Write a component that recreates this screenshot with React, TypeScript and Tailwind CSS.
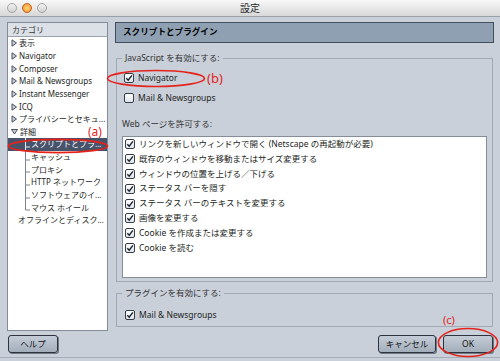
import React from "react";

type Cat = { t: string; kind: "closed" | "open" | "sub" | "plain"; last?: boolean; sel?: boolean };

const cats: Cat[] = [
  { t: "表示", kind: "closed" },
  { t: "Navigator", kind: "closed" },
  { t: "Composer", kind: "closed" },
  { t: "Mail & Newsgroups", kind: "closed" },
  { t: "Instant Messenger", kind: "closed" },
  { t: "ICQ", kind: "closed" },
  { t: "プライバシーとセキュ...", kind: "closed" },
  { t: "詳細", kind: "open" },
  { t: "スクリプトとプラ...", kind: "sub", sel: true },
  { t: "キャッシュ", kind: "sub" },
  { t: "プロキシ", kind: "sub" },
  { t: "HTTP ネットワーク", kind: "sub" },
  { t: "ソフトウェアのイ...", kind: "sub" },
  { t: "マウス ホイール", kind: "sub", last: true },
  { t: "オフラインとディスク...", kind: "plain" },
];

const perms = [
  "リンクを新しいウィンドウで開く (Netscape の再起動が必要)",
  "既存のウィンドウを移動またはサイズ変更する",
  "ウィンドウの位置を上げる／下げる",
  "ステータス バーを隠す",
  "ステータス バーのテキストを変更する",
  "画像を変更する",
  "Cookie を作成または変更する",
  "Cookie を読む",
];

const Check = ({ on }: { on?: boolean }) => (
  <span className="w-[10px] h-[10px] shrink-0 rounded-[2px] border border-[#363e4a] bg-linear-to-b from-[#ffffff] to-[#dfe4ea] flex items-center justify-center">
    {on && (
      <svg width="8" height="8" viewBox="0 0 8 8">
        <path d="M1.3 4.3 L3.2 6.2 L6.9 1.3" fill="none" stroke="#1b222c" strokeWidth="1.4" />
      </svg>
    )}
  </span>
);

const Arrow = ({ open }: { open?: boolean }) =>
  open ? (
    <svg width="7" height="7" viewBox="0 0 7 7" className="shrink-0">
      <polygon points="0.5,1.5 6.5,1.5 3.5,6" fill="#c6cdd7" stroke="#4a5260" strokeWidth="1" />
    </svg>
  ) : (
    <svg width="6" height="8" viewBox="0 0 6 8" className="shrink-0">
      <polygon points="1,0.8 5.5,4 1,7.2" fill="#c6cdd7" stroke="#4a5260" strokeWidth="1" />
    </svg>
  );

const Tree = ({ last, sel }: { last?: boolean; sel?: boolean }) => (
  <svg width="7" height="13" viewBox="0 0 7 13" className="shrink-0">
    <path
      d={last ? "M1.5 0 V9 H6" : "M1.5 0 V13 M1.5 9 H6"}
      fill="none"
      stroke={sel ? "#e6eaf0" : "#7c8490"}
      strokeWidth="1"
    />
  </svg>
);

const Btn = ({ label, w }: { label: string; w: string }) => (
  <button
    className={`${w} h-[18px] rounded-[3px] border border-[#2d343f] bg-linear-to-b from-[#c4cdd7] to-[#a3aebb] shadow-[1px_1px_0_#6f7884] text-[8.5px] text-[#111] flex items-center justify-center`}
  >
    {label}
  </button>
);

export default function App() {
  return (
    <div className="w-[500px] h-[361px] bg-[#c9d0da] relative overflow-hidden flex flex-col font-['Noto_Sans','Noto_Sans_CJK_JP',sans-serif] text-[#1d1f23]">
      {/* title bar */}
      <div className="h-[17px] shrink-0 grid grid-cols-[1fr_auto_1fr] items-center bg-linear-to-b from-[#f8f8f8] to-[#d8d8d8] border-b border-[#9aa0a8]">
        <div className="flex gap-[5px] pl-[7px]">
          <span className="w-[10px] h-[10px] rounded-full border border-[#a4a4a4] bg-linear-to-b from-[#f2f2f2] to-[#d2d2d2]" />
          <span className="w-[10px] h-[10px] rounded-full border border-[#c0601a] bg-radial from-[#ffd77a] to-[#ee8a16]" />
          <span className="w-[10px] h-[10px] rounded-full border border-[#a4a4a4] bg-linear-to-b from-[#f2f2f2] to-[#d2d2d2]" />
        </div>
        <div className="text-[10px] leading-[12px] text-[#2a2a2a]">設定</div>
        <div />
      </div>

      {/* main */}
      <div className="flex gap-[7px] pl-[7px] pr-[6px] pt-[5px] h-[314px] shrink-0">
        {/* left: categories */}
        <div className="w-[101px] h-[309px] border border-[#848c97] bg-white flex flex-col text-[8px]">
          <div className="h-[14px] border-b border-[#9aa2ad] bg-[#dce1e7] pl-[4px] flex items-center text-[#333]">
            カテゴリ
          </div>
          <div className="flex flex-col">
            {cats.map((c) => (
              <div
                key={c.t}
                className={`h-[12.65px] flex items-center whitespace-nowrap overflow-hidden ${
                  c.sel ? "bg-[#46536a] text-white" : ""
                } ${c.kind === "sub" ? "pl-[16px]" : c.kind === "plain" ? "pl-[10px]" : "pl-[3px] gap-[2px]"}`}
              >
                {c.kind === "closed" && <Arrow />}
                {c.kind === "open" && <Arrow open />}
                {c.kind === "sub" && <Tree last={c.last} sel={c.sel} />}
                <span className="leading-[12px]">{c.t}</span>
              </div>
            ))}
          </div>
        </div>

        {/* right: settings */}
        <div className="flex-1 flex flex-col text-[8.5px]">
          <div className="h-[21px] border border-[#434e5c] bg-[#8fa0b2] pl-[7px] flex items-center font-bold text-[8.6px] text-black">
            スクリプトとプラグイン
          </div>

          <fieldset className="mt-[8px] mx-[1px] border border-[#a1a9b4] px-[5px] pb-[3px]">
            <legend className="px-[3px] leading-[14px] text-[#333]">JavaScript を有効にする:</legend>
            <div className="mt-[6px] h-[14px] pl-[2px] flex items-center gap-[4px]">
              <Check on />
              <span>Navigator</span>
            </div>
            <div className="mt-[6px] h-[14px] pl-[2px] flex items-center gap-[4px]">
              <Check />
              <span>Mail &amp; Newsgroups</span>
            </div>
            <div className="mt-[12px] h-[14px] flex items-center text-[#333]">Web ページを許可する:</div>
            <div className="mt-[5px] h-[142px] border border-[#858d98] bg-white flex flex-col">
              {perms.map((p) => (
                <div key={p} className="h-[14.8px] pl-[2px] flex items-center gap-[4px] whitespace-nowrap">
                  <Check on />
                  <span>{p}</span>
                </div>
              ))}
            </div>
          </fieldset>

          <fieldset className="mt-[4px] mx-[1px] border border-[#a1a9b4] px-[5px] pb-[4px]">
            <legend className="px-[3px] leading-[14px] text-[#333]">プラグインを有効にする:</legend>
            <div className="mt-[8px] h-[14px] pl-[3px] flex items-center gap-[4px]">
              <Check on />
              <span>Mail &amp; Newsgroups</span>
            </div>
          </fieldset>
        </div>
      </div>

      {/* buttons */}
      <div className="mt-[4px] h-[18px] shrink-0 flex justify-between pl-[8px] pr-[7px]">
        <Btn label="ヘルプ" w="w-[50px]" />
        <div className="flex gap-[7px]">
          <Btn label="キャンセル" w="w-[58px]" />
          <Btn label="OK" w="w-[50px]" />
        </div>
      </div>
      <div className="mt-[4px] h-[1px] bg-[#a5adb8] shrink-0" />

      {/* red annotations */}
      <svg className="absolute left-[7px] top-[138px]" width="102" height="16" viewBox="0 0 102 16">
        <ellipse cx="51" cy="8" rx="49.5" ry="6.6" fill="none" stroke="#e5231b" strokeWidth="1.6" />
      </svg>
      <span className="absolute left-[88px] top-[126px] text-[12px] leading-[11px] text-[#e5231b]">(a)</span>

      <svg className="absolute left-[106px] top-[69px]" width="100" height="19" viewBox="0 0 100 19">
        <ellipse cx="50" cy="9.5" rx="48.5" ry="8" fill="none" stroke="#e5231b" strokeWidth="1.6" />
      </svg>
      <span className="absolute left-[207px] top-[71px] text-[13px] leading-[14px] text-[#e5231b]">(b)</span>

      <svg className="absolute left-[437px] top-[327px]" width="62" height="31" viewBox="0 0 62 31">
        <ellipse cx="31" cy="15.5" rx="29.6" ry="14" fill="none" stroke="#e5231b" strokeWidth="1.6" />
      </svg>
      <span className="absolute left-[443px] top-[314px] text-[11px] leading-[12px] text-[#e5231b]">(c)</span>
    </div>
  );
}
